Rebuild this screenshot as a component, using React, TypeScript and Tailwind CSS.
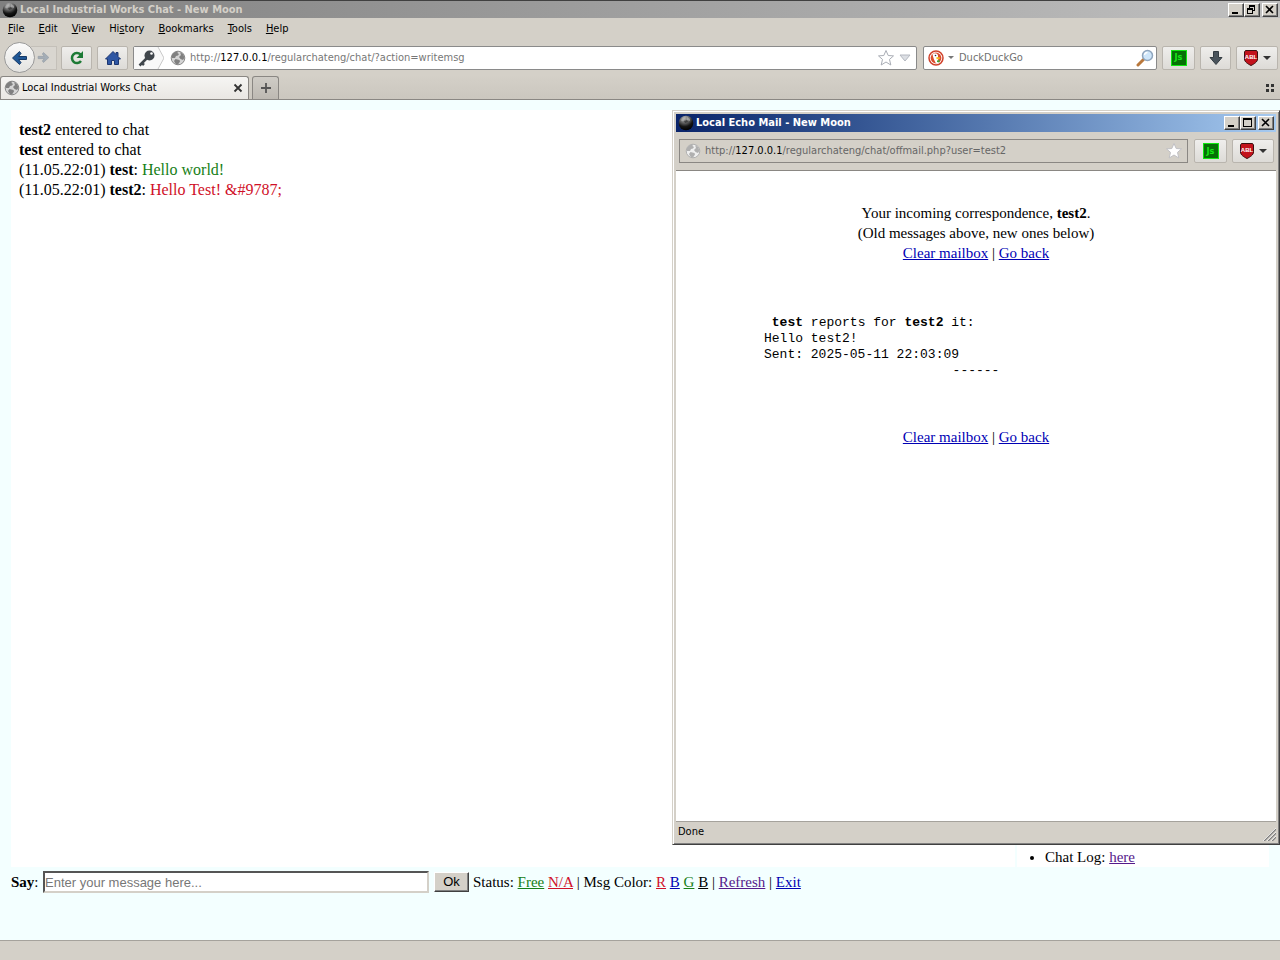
import type { ReactNode } from "react";

const UI = "font-['DejaVu_Sans_Condensed','Liberation_Sans',sans-serif] text-[11px] leading-4 text-black";
const SERIF = "font-['Liberation_Serif',serif] text-[15px] leading-5 text-black";
const BEVEL =
  "border border-t-white border-l-white border-r-[#404040] border-b-[#404040] shadow-[inset_-1px_-1px_0_#808080]";

const menus = [
  { id: "file", key: "F", rest: "ile" },
  { id: "edit", key: "E", rest: "dit" },
  { id: "view", key: "V", rest: "iew" },
  { id: "history", pre: "Hi", key: "s", rest: "tory" },
  { id: "bookmarks", key: "B", rest: "ookmarks" },
  { id: "tools", key: "T", rest: "ools" },
  { id: "help", key: "H", rest: "elp" },
];

const messages = [
  { user: "test2", text: "entered to chat" },
  { user: "test", text: "entered to chat" },
  { time: "(11.05.22:01)", user: "test", text: "Hello world!", color: "text-[#178017]" },
  { time: "(11.05.22:01)", user: "test2", text: "Hello Test! &#9787;", color: "text-[#d01028]" },
];

function MoonIcon() {
  return (
    <svg width="16" height="16" viewBox="0 0 16 16" aria-hidden="true" className="shrink-0">
      <defs>
        <radialGradient id="moon" cx="0.4" cy="0.15" r="0.85">
          <stop offset="0" stopColor="#b0b0b0" />
          <stop offset="0.4" stopColor="#666" />
          <stop offset="0.7" stopColor="#151515" />
          <stop offset="1" stopColor="#000" />
        </radialGradient>
      </defs>
      <circle cx="8" cy="8" r="7.3" fill="url(#moon)" />
      <path d="M3 5l2-2.500 2 1-1 2-2 1zM9 2l3 2v2L9 5z" fill="#bbb" opacity="0.6" />
      <path d="M6 6l3-1 1 2-3 1z" fill="#111" opacity="0.5" />
    </svg>
  );
}

function GlobeIcon({ faded = false }: { faded?: boolean }) {
  return (
    <svg width="16" height="16" viewBox="0 0 16 16" aria-hidden="true" className="shrink-0">
      <circle cx="8" cy="8" r="6.8" fill={faded ? "#efefef" : "#d4d4d4"} stroke={faded ? "#b0b0b0" : "#888"} />
      <path
        d="M2 5C3 3 5 1.600 8 1.500L7.500 3 9 4 8 5.500 6 6 5 8 2 8zM10 2l3.500 2.500.8 3.500-1.300 2-2.500-1L9 7l2-2zM5.500 9l4 1 .5 1.500-2 3-2.500-.8L4 11z"
        fill={faded ? "#b0b0b0" : "#808080"}
      />
    </svg>
  );
}

function StarIcon({ solid = false }: { solid?: boolean }) {
  return (
    <svg width="18" height="18" viewBox="0 0 18 18" aria-hidden="true">
      <path
        d="M9 1.500l2.200 5 5.300.4-4 3.500 1.300 5.600L9 13l-4.800 3 1.300-5.600-4-3.500 5.300-.4z"
        fill="#fff"
        stroke={solid ? "#c0c0c4" : "#a9adb5"}
        strokeLinejoin="round"
      />
    </svg>
  );
}

function DownCaret({ light = false }: { light?: boolean }) {
  return light ? (
    <svg width="6" height="3" viewBox="0 0 6 3" aria-hidden="true">
      <path d="M0 0h6L3 3z" fill="#777" />
    </svg>
  ) : (
    <svg width="8" height="4" viewBox="0 0 8 4" aria-hidden="true">
      <path d="M0 0h8L4 4z" fill="#333" />
    </svg>
  );
}

function AblIcon() {
  return (
    <svg width="16" height="16" viewBox="0 0 16 16" aria-hidden="true">
      <path d="M2.500.5h11l1 1.500v7c0 3-3.500 5-6.500 6.500C5 14 1.500 12 1.500 9V2z" fill="#c3121c" stroke="#3a1010" />
      <text
        x="8"
        y="9"
        textAnchor="middle"
        fill="#fff"
        fontFamily="Liberation Sans, sans-serif"
        fontSize="6"
        fontWeight="bold"
      >
        ABL
      </text>
    </svg>
  );
}

function JsIcon() {
  return (
    <span className="flex size-4 items-center justify-center border border-[#10e810] bg-[#067006] font-bold text-[9px] leading-none text-[#18e818]">
      Js
    </span>
  );
}

function ToolButton({ label, className, children }: { label: string; className: string; children: ReactNode }) {
  return (
    <button
      type="button"
      aria-label={label}
      className={`flex h-6 shrink-0 items-center justify-center rounded-[2px] border border-[#b9b5ae] bg-gradient-to-b from-[#efeeec] to-[#dddbd7] ${className}`}
    >
      {children}
    </button>
  );
}

function AddonButtons({ children }: { children?: ReactNode }) {
  return (
    <>
      <ToolButton label="JavaScript" className="w-[33px]">
        <JsIcon />
      </ToolButton>
      {children}
      <ToolButton label="Ad blocker" className="w-[42px] gap-1">
        <AblIcon />
        <DownCaret />
      </ToolButton>
    </>
  );
}

function CaptionButtons({ maximized = false }: { maximized?: boolean }) {
  const button = `flex h-[14px] w-4 items-center justify-center bg-[#d4d0c8] ${BEVEL}`;
  return (
    <div className="flex">
      <button type="button" aria-label="Minimize" className={button}>
        <svg width="12" height="10" viewBox="0 0 12 10" aria-hidden="true">
          <path d="M2 7h6v2H2z" />
        </svg>
      </button>
      <button type="button" aria-label={maximized ? "Restore" : "Maximize"} className={button}>
        <svg width="12" height="10" viewBox="0 0 12 10" aria-hidden="true" shapeRendering="crispEdges">
          {maximized ? (
            <path d="M3 0h6v6H7V5h1V2H4v1H3zM1 3h6v6H1zM2 5v3h4V5z" fillRule="evenodd" />
          ) : (
            <path d="M1 0h9v9H1zM2 2v6h7V2z" fillRule="evenodd" />
          )}
        </svg>
      </button>
      <button type="button" aria-label="Close" className={`ml-[2px] ${button}`}>
        <svg width="12" height="10" viewBox="0 0 12 10" aria-hidden="true">
          <path d="M2 1l7 7M9 1L2 8" stroke="#000" strokeWidth="1.600" />
        </svg>
      </button>
    </div>
  );
}

function NavButtons() {
  return (
    <div className="flex shrink-0 items-center">
      <button
        type="button"
        aria-label="Back"
        className="z-10 flex size-[31px] items-center justify-center rounded-full border border-[#9a9a9a] bg-gradient-to-b from-[#fbfbfb] to-[#e4e3e0]"
      >
        <svg width="17" height="16" viewBox="0 0 17 16" aria-hidden="true">
          <path d="M8.500 1.500L1.500 8l7 6.500 1.500-2L7.500 9.500h8v-3h-8L10 3.500z" fill="#1f5796" stroke="#163a68" />
        </svg>
      </button>
      <button
        type="button"
        aria-label="Forward"
        disabled
        className="-ml-1 flex h-6 w-[26px] items-center justify-center border border-l-0 border-[#c4c0b9] bg-[#d9d6d0]"
      >
        <svg width="13" height="13" viewBox="0 0 17 16" aria-hidden="true">
          <path d="M8.500 1.500l7 6.500-7 6.500-1.500-2 2.500-3h-8v-3h8L7 3.500z" fill="#a4adb6" stroke="#98a0a8" />
        </svg>
      </button>
    </div>
  );
}

function NavToolbar() {
  return (
    <div className="flex h-[35px] items-center pr-[2px] pl-1">
      <NavButtons />
      <ToolButton label="Reload" className="ml-1 w-[31px]">
        <svg width="16" height="16" viewBox="0 0 16 16" aria-hidden="true">
          <path d="M11.500 4.500A5 5 0 1 0 12 11" fill="none" stroke="#1d7a35" strokeWidth="2.500" />
          <path d="M14 1v7H7.500z" fill="#1d7a35" />
        </svg>
      </ToolButton>
      <ToolButton label="Home" className="ml-[5px] w-[31px]">
        <svg width="16" height="16" viewBox="0 0 16 16" aria-hidden="true">
          <path
            d="M8 1.500l3 3V2.500h2v4l2.500 2.500h-2v5.500H9.500v-4h-3v4H2.500V9h-2z"
            fill="#2f57a4"
            stroke="#1c3670"
            strokeLinejoin="round"
          />
        </svg>
      </ToolButton>
      <div className="ml-[5px] flex h-6 min-w-0 flex-1 items-center rounded-[2px] border border-[#8a8a8a] bg-white">
        <svg width="30" height="22" viewBox="0 0 30 22" aria-hidden="true" className="shrink-0">
          <path d="M0 0h24l6 11-6 11H0z" fill="#f8f8f8" />
          <path d="M24 0l6 11-6 11" fill="none" stroke="#c8c8c8" />
          <path d="M13.500 10.500L5.500 18.500M8 16l2 2" stroke="#40464c" strokeWidth="2.500" />
          <circle cx="15.500" cy="8.500" r="5" fill="#40464c" />
          <circle cx="17.500" cy="6.500" r="1.300" fill="#fff" />
        </svg>
        <span className="ml-[6px]">
          <GlobeIcon />
        </span>
        <a href="#chat" className="ml-1 flex-1 truncate text-[#777]">
          http://<span className="text-black">127.0.0.1</span>/regularchateng/chat/?action=writemsg
        </a>
        <button type="button" aria-label="Bookmark this page">
          <StarIcon />
        </button>
        <button type="button" aria-label="Show history" className="mr-[5px] ml-1">
          <svg width="12" height="8" viewBox="0 0 12 8" aria-hidden="true">
            <path d="M1 1h10L6 7z" fill="#dcdfe4" stroke="#b4b8c0" />
          </svg>
        </button>
      </div>
      <div className="ml-[6px] flex h-6 w-[234px] shrink-0 items-center rounded-[2px] border border-[#8a8a8a] bg-white pr-[2px] pl-1">
        <button type="button" aria-label="Choose search engine" className="flex items-center gap-1">
          <svg width="16" height="16" viewBox="0 0 16 16" aria-hidden="true">
            <circle cx="8" cy="8" r="7" fill="#fff" stroke="#d0402a" strokeWidth="1.500" />
            <circle cx="8" cy="8" r="5.400" fill="#dc4d2c" />
            <path d="M4.500 4c2-1.500 5-1 5.500 1.500L10 9l1 4-3 .400L6 9.500 5 6.500z" fill="#fff" />
            <path d="M8.500 7l3.500.500-.5 1.500-3 .200z" fill="#f4c020" />
            <path d="M9 10.500l2.500-.500v2.500L9 12z" fill="#3fa535" />
            <circle cx="7.500" cy="5.500" r="0.800" fill="#234" />
          </svg>
          <DownCaret light />
        </button>
        <input
          type="text"
          aria-label="Search"
          placeholder="DuckDuckGo"
          className="ml-[5px] min-w-0 flex-1 outline-none placeholder:text-[#707070]"
        />
        <button type="button" aria-label="Search the web">
          <svg width="18" height="18" viewBox="0 0 18 18" aria-hidden="true">
            <path d="M7.500 10.500L2 16" stroke="#b9783c" strokeWidth="3" strokeLinecap="round" />
            <circle cx="11.500" cy="6.500" r="5" fill="#cfe6fa" stroke="#8fa5bd" strokeWidth="1.500" />
            <path d="M8.500 6a3 3 0 0 1 3-2.500" fill="none" stroke="#fff" strokeWidth="1.300" />
          </svg>
        </button>
      </div>
      <div className="ml-[5px] flex gap-[5px]">
        <AddonButtons>
          <ToolButton label="Downloads" className="w-[31px]">
            <svg width="16" height="16" viewBox="0 0 16 16" aria-hidden="true">
              <path d="M5.500 1.500h5v6h3.500L8 14.500 2 7.500h3.500z" fill="#4a545c" stroke="#343c42" />
            </svg>
          </ToolButton>
        </AddonButtons>
      </div>
    </div>
  );
}

function TabStrip() {
  return (
    <div className="flex h-[25px] items-end border-b border-[#8a8783] bg-gradient-to-b from-[#d4d0c8] to-[#cbc7bf]">
      <div className="flex h-[23px] w-[249px] items-center rounded-t-[3px] border border-b-0 border-[#8a8783] bg-gradient-to-b from-[#f6f5f3] to-[#e9e7e3] pr-1 pl-[3px]">
        <GlobeIcon />
        <span className="ml-[2px] flex-1 truncate">Local Industrial Works Chat</span>
        <button type="button" aria-label="Close tab">
          <svg width="12" height="12" viewBox="0 0 12 12" aria-hidden="true">
            <path d="M2.500 2.500l7 7M9.500 2.500l-7 7" stroke="#333" strokeWidth="1.800" />
          </svg>
        </button>
      </div>
      <button
        type="button"
        aria-label="New tab"
        className="ml-[3px] flex h-[23px] w-[27px] items-center justify-center rounded-t-[3px] border border-b-0 border-[#8a8783] bg-gradient-to-b from-[#cfccc6] to-[#bdb9b2]"
      >
        <svg width="12" height="12" viewBox="0 0 12 12" aria-hidden="true">
          <path d="M6 1v10M1 6h10" stroke="#555" strokeWidth="1.800" />
        </svg>
      </button>
      <button type="button" aria-label="Tab groups" className="mr-[5px] mb-[6px] ml-auto">
        <svg width="9" height="9" viewBox="0 0 9 9" aria-hidden="true" shapeRendering="crispEdges">
          <path d="M0 0h3v3H0zM5 0h3v3H5zM0 5h3v3H0zM5 5h3v3H5z" fill="#333" />
        </svg>
      </button>
    </div>
  );
}

function MailboxLinks() {
  return (
    <>
      <a href="#clear" className="text-[#0000b4] underline">
        Clear mailbox
      </a>{" "}
      |{" "}
      <a href="#back" className="text-[#0000b4] underline">
        Go back
      </a>
    </>
  );
}

function MailWindow() {
  return (
    <section
      aria-label="Local Echo Mail"
      className={`absolute top-[110px] right-0 flex h-[735px] w-[608px] flex-col border border-t-[#d4d0c8] border-l-[#d4d0c8] border-r-[#404040] border-b-[#404040] bg-[#d4d0c8] p-[3px] shadow-[inset_1px_1px_0_#fff,inset_-1px_-1px_0_#808080] ${UI}`}
    >
      <header className="flex h-[18px] shrink-0 items-center bg-gradient-to-r from-[#0a246a] to-[#a6caf0] px-[2px]">
        <MoonIcon />
        <h2 className="ml-[2px] flex-1 truncate font-bold text-white">Local Echo Mail - New Moon</h2>
        <CaptionButtons />
      </header>
      <div className="flex h-[39px] shrink-0 items-center gap-[6px] border-b border-[#8a8783] pr-[2px] pl-[3px]">
        <div className="flex h-6 min-w-0 flex-1 items-center border border-[#8a8783] pr-1 pl-[5px]">
          <GlobeIcon faded />
          <a href="#mail" className="ml-1 flex-1 truncate text-[#666]">
            http://<span className="text-black">127.0.0.1</span>/regularchateng/chat/offmail.php?user=test2
          </a>
          <button type="button" aria-label="Bookmark this page">
            <StarIcon solid />
          </button>
        </div>
        <div className="flex gap-[5px]">
          <AddonButtons />
        </div>
      </div>
      <div className={`flex-1 bg-white px-[88px] pt-8 ${SERIF}`}>
        <p className="text-center">
          Your incoming correspondence, <b>test2</b>.<br />
          (Old messages above, new ones below)
          <br />
          <MailboxLinks />
        </p>
        <pre className="mt-13 font-['Liberation_Mono',monospace] text-[13px] leading-4">
          {" "}
          <b>test</b> reports for <b>test2</b> it:{"\n"}
          Hello test2!{"\n"}
          Sent: 2025-05-11 22:03:09
        </pre>
        <p className="text-center font-['Liberation_Mono',monospace] text-[13px] leading-4">------</p>
        <p className="mt-12 text-center">
          <MailboxLinks />
        </p>
      </div>
      <footer className="flex h-5 shrink-0 items-center justify-between border-t border-[#a5a29c] pl-[2px]">
        <span>Done</span>
        <svg width="13" height="13" viewBox="0 0 13 13" aria-hidden="true" className="self-end">
          <path d="M1 13L13 1M5 13l8-8M9 13l4-4" stroke="#808080" strokeWidth="1.500" />
          <path d="M0 13L13 0M4 13l9-9M8 13l5-5" stroke="#fff" strokeWidth="0.700" />
        </svg>
      </footer>
    </section>
  );
}

function ChatForm() {
  return (
    <form className="mt-1 flex h-[22px] items-center" onSubmit={(e) => e.preventDefault()}>
      <label htmlFor="say" className="w-8 shrink-0">
        <b>Say</b>:
      </label>
      <input
        id="say"
        type="text"
        placeholder="Enter your message here..."
        className="h-[22px] w-[386px] border-2 border-t-[#555] border-l-[#555] border-r-[#d4d0c8] border-b-[#d4d0c8] bg-white font-['Liberation_Sans',sans-serif] text-[13px] outline-none placeholder:text-[#777]"
      />
      <button
        type="submit"
        className={`mr-1 ml-[5px] h-5 w-[35px] bg-[#d4d0c8] font-['Liberation_Sans',sans-serif] text-[13px] leading-4 ${BEVEL}`}
      >
        Ok
      </button>
      <span>
        Status: <a href="#free" className="text-[#178017] underline">Free</a>{" "}
        <a href="#na" className="text-[#d01028] underline">N/A</a> | Msg Color:{" "}
        <a href="#red" className="text-[#d01028] underline">R</a>{" "}
        <a href="#blue" className="text-[#0000b4] underline">B</a>{" "}
        <a href="#green" className="text-[#178017] underline">G</a>{" "}
        <a href="#black" className="underline">B</a> |{" "}
        <a href="#refresh" className="text-[#551a8b] underline">Refresh</a> |{" "}
        <a href="#exit" className="text-[#0000b4] underline">Exit</a>
      </span>
    </form>
  );
}

export default function App() {
  return (
    <div className={`relative flex min-h-screen flex-col bg-[#d4d0c8] ${UI}`}>
      <header className="flex h-[18px] items-center border-t border-[#404040] bg-gradient-to-r from-[#808080] to-[#c0c0c0] px-[2px]">
        <MoonIcon />
        <h1 className="ml-[2px] flex-1 truncate font-bold text-[#d4d0c8]">Local Industrial Works Chat - New Moon</h1>
        <CaptionButtons maximized />
      </header>
      <nav className="flex h-[22px] items-center gap-[14px] pl-2">
        {menus.map((m) => (
          <button key={m.id} type="button">
            {m.pre}
            <span className="underline">{m.key}</span>
            {m.rest}
          </button>
        ))}
      </nav>
      <NavToolbar />
      <TabStrip />

      <main className={`flex flex-1 flex-col bg-[#f3ffff] px-[11px] pt-[10px] pb-[47px] ${SERIF}`}>
        <div className="flex flex-1 gap-[2px]">
          <div className="flex-1 bg-white px-2 py-[10px] text-base leading-5">
            {messages.map((m, i) => (
              <p key={i}>
                {m.time ? `${m.time} ` : null}
                <b>{m.user}</b>
                {m.time ? ": " : " "}
                <span className={m.color}>{m.text}</span>
              </p>
            ))}
          </div>
          <aside className="flex w-[252px] flex-col justify-end bg-white">
            <ul className="list-disc pl-7">
              <li>
                Chat Log: <a href="#log" className="text-[#551a8b] underline">here</a>
              </li>
            </ul>
          </aside>
        </div>
        <ChatForm />
      </main>
      <footer className="h-5 border-t border-[#a5a29c]" />

      <MailWindow />
    </div>
  );
}
